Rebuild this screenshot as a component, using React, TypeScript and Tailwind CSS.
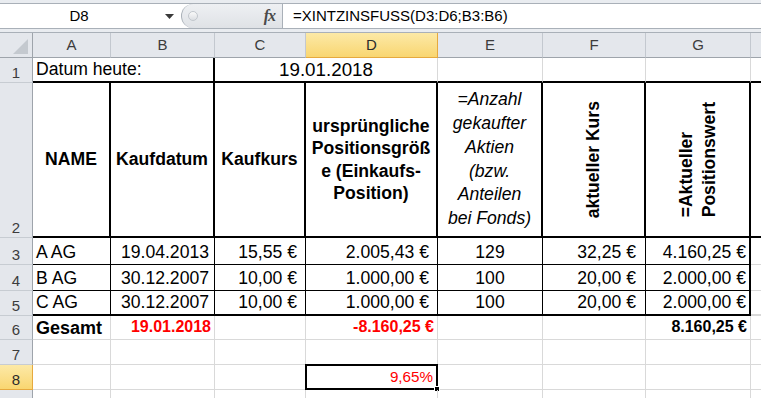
import React from 'react';

type CellProps = { w: string; className?: string; children?: React.ReactNode };

const Cell = ({ w, className = '', children }: CellProps) => (
  <div className={`${w} shrink-0 flex ${className}`}>{children}</div>
);

const RowHead = ({ n, active = false }: { n?: number; active?: boolean }) => (
  <div
    className={`w-[33px] shrink-0 flex items-end justify-center leading-[18px] font-normal not-italic text-[15px] border-r border-b ${
      active
        ? 'bg-linear-to-b from-[#fce9a6] to-[#f9d670] border-b-[#e6a93e] border-r-[#e6a93e] text-[#2b2b2b]'
        : 'bg-[#e4e7ec] border-b-[#c7ccd2] border-r-[#9ea4ab] text-[#3c3c3c]'
    }`}
  >
    {n}
  </div>
);

const ColHead = ({ w, label, active = false }: { w: string; label: string; active?: boolean }) => (
  <div
    className={`${w} shrink-0 flex items-center justify-center text-[15px] border-r border-b ${
      active
        ? 'bg-linear-to-b from-[#fce9a6] to-[#f9d670] border-r-[#e6a93e] border-b-[#e6a93e] text-[#2b2b2b]'
        : 'bg-[#e4e7ec] border-r-[#c3c8cf] border-b-[#9ea4ab] text-[#3c3c3c]'
    }`}
  >
    {label}
  </div>
);

const App: React.FC = () => {
  return (
    <div className="w-[761px] h-[398px] overflow-hidden bg-white [font-family:'Liberation_Sans',Arial,sans-serif] text-black">
      {/* formula bar */}
      <div className="h-[32px] bg-[#e9ecf0] pt-[3px]">
        <div className="h-[26px] flex bg-white border-y border-[#a9b0b8]">
          <div className="w-[158px] flex items-center justify-center text-[15px] pt-[1px]">D8</div>
          <div className="w-[23px] flex items-center justify-center">
            <svg width="9" height="5" viewBox="0 0 9 5">
              <polygon points="0,0 9,0 4.5,5" fill="#3a3a3a" />
            </svg>
          </div>
          <div className="w-[101px] flex items-center rounded-l-[13px] border-l border-[#a9b0b8] bg-linear-to-b from-[#eef0f3] to-[#dfe2e6]">
            <div className="ml-[6px] w-[10px] h-[10px] rounded-full border border-[#c2c7cd] bg-linear-to-b from-[#fafafa] to-[#dcdfe3]" />
            <span className="ml-auto mr-[7px] [font-family:'Liberation_Serif',serif] italic font-bold text-[16px] text-[#4a4a4a] tracking-[-1px]">
              fx
            </span>
          </div>
          <div className="flex-1 flex items-center pl-[10px] border-l border-[#a9b0b8] text-[15px] pt-[1px]">
            =XINTZINSFUSS(D3:D6;B3:B6)
          </div>
        </div>
      </div>

      {/* column headers */}
      <div className="flex h-[26px] border-t border-[#a9b0b8]">
        <div className="w-[33px] shrink-0 flex items-end justify-end pr-[4px] pb-[3px] bg-[#e4e7ec] border-r border-b border-[#9ea4ab]">
          <svg width="15" height="15" viewBox="0 0 15 15">
            <polygon points="15,0 15,15 0,15" fill="#c4c9cf" />
          </svg>
        </div>
        <ColHead w="w-[78px]" label="A" />
        <ColHead w="w-[104px]" label="B" />
        <ColHead w="w-[91px]" label="C" />
        <ColHead w="w-[132px]" label="D" active />
        <ColHead w="w-[105px]" label="E" />
        <ColHead w="w-[103px]" label="F" />
        <ColHead w="w-[105px]" label="G" />
        <div className="flex-1 bg-[#e4e7ec] border-b border-[#9ea4ab]" />
      </div>

      {/* row 1 */}
      <div className="flex h-[25px] text-[17.6px] leading-[20px]">
        <RowHead n={1} />
        <Cell w="w-[182px]" className="items-end pl-[3px] pb-[2px] border-r-2 border-b-2 border-black">
          Datum heute:
        </Cell>
        <Cell w="w-[223px]" className="items-end justify-center pb-[1px] text-[18.8px] border-r border-b-2 border-r-[#d9d9d9] border-b-black">
          19.01.2018
        </Cell>
        <Cell w="w-[105px]" className="border-r border-b-2 border-r-[#d9d9d9] border-b-black" />
        <Cell w="w-[103px]" className="border-r border-b-2 border-r-[#d9d9d9] border-b-black" />
        <Cell w="w-[105px]" className="border-r border-b-2 border-r-[#d9d9d9] border-b-black" />
        <div className="flex-1 border-b-2 border-black" />
      </div>

      {/* row 2 */}
      <div className="flex h-[155px] text-[17.6px] font-bold">
        <RowHead n={2} />
        <Cell w="w-[78px]" className="items-center justify-center border-r-2 border-b-2 border-black">
          NAME
        </Cell>
        <Cell w="w-[104px]" className="items-center justify-center border-r-2 border-b-2 border-black">
          Kaufdatum
        </Cell>
        <Cell w="w-[91px]" className="items-center justify-center border-r-2 border-b-2 border-black">
          Kaufkurs
        </Cell>
        <Cell w="w-[132px]" className="items-center justify-center text-center leading-[22.4px] border-r-2 border-b-2 border-black">
          <div>
            ursprüngliche
            <br />
            Positionsgröß
            <br />e (Einkaufs-
            <br />
            Position)
          </div>
        </Cell>
        <Cell w="w-[105px]" className="items-center justify-center text-center leading-[23.8px] font-normal italic border-r-2 border-b-2 border-black">
          <div>
            =Anzahl
            <br />
            gekaufter
            <br />
            Aktien
            <br />
            (bzw.
            <br />
            Anteilen
            <br />
            bei Fonds)
          </div>
        </Cell>
        <Cell w="w-[103px]" className="items-center justify-center border-r-2 border-b-2 border-black">
          <div className="[writing-mode:vertical-rl] rotate-180 leading-[23px]">aktueller Kurs</div>
        </Cell>
        <Cell w="w-[105px]" className="items-center justify-center border-r-2 border-b-2 border-black">
          <div className="[writing-mode:vertical-rl] rotate-180 leading-[23px] text-left">
            =Aktueller
            <br />
            Positionswert
          </div>
        </Cell>
        <div className="flex-1 border-b-2 border-black" />
      </div>

      {/* rows 3-5 */}
      {[
        ['A AG', '19.04.2013', '15,55 €', '2.005,43 €', '129', '32,25 €', '4.160,25 €', 'h-[27px]', 'border-b'],
        ['B AG', '30.12.2007', '10,00 €', '1.000,00 €', '100', '20,00 €', '2.000,00 €', 'h-[26px]', 'border-b'],
        ['C AG', '30.12.2007', '10,00 €', '1.000,00 €', '100', '20,00 €', '2.000,00 €', 'h-[25px]', 'border-b-2'],
      ].map((r, i) => (
        <div key={i} className={`flex ${r[7]} text-[17.6px] leading-[20px]`}>
          <RowHead n={i + 3} />
          <Cell w="w-[78px]" className={`items-end pl-[3px] pb-[2px] border-r ${r[8]} border-black`}>
            {r[0]}
          </Cell>
          <Cell w="w-[104px]" className={`items-end justify-end pr-[5px] pb-[2px] border-r ${r[8]} border-black`}>
            {r[1]}
          </Cell>
          <Cell w="w-[91px]" className={`items-end justify-end pr-[8px] pb-[2px] border-r ${r[8]} border-black`}>
            {r[2]}
          </Cell>
          <Cell w="w-[132px]" className={`items-end justify-end pr-[8px] pb-[2px] border-r ${r[8]} border-black`}>
            {r[3]}
          </Cell>
          <Cell w="w-[105px]" className={`items-end justify-center pb-[2px] border-r ${r[8]} border-black`}>
            {r[4]}
          </Cell>
          <Cell w="w-[103px]" className={`items-end justify-end pr-[9px] pb-[2px] border-r ${r[8]} border-black`}>
            {r[5]}
          </Cell>
          <Cell w="w-[105px]" className={`items-end justify-end pr-[3px] pb-[2px] border-r-2 ${r[8]} border-black`}>
            {r[6]}
          </Cell>
          <div className={`flex-1 ${r[8]} border-[#d9d9d9]`} />
        </div>
      ))}

      {/* row 6 */}
      <div className="flex h-[24px] leading-[20px] font-bold">
        <RowHead n={6} />
        <Cell w="w-[78px]" className="items-end pl-[3px] pb-[1px] text-[18px] border-r border-b border-[#d9d9d9]">
          Gesamt
        </Cell>
        <Cell w="w-[104px]" className="items-end justify-end pr-[3px] pb-[2px] text-[16px] text-[#ff0000] border-r border-b border-[#d9d9d9]">
          19.01.2018
        </Cell>
        <Cell w="w-[91px]" className="border-r border-b border-[#d9d9d9]" />
        <Cell w="w-[132px]" className="items-end justify-end pr-[3px] pb-[2px] text-[16px] text-[#ff0000] border-r border-b border-[#d9d9d9]">
          -8.160,25 €
        </Cell>
        <Cell w="w-[105px]" className="border-r border-b border-[#d9d9d9]" />
        <Cell w="w-[103px]" className="border-r border-b border-[#d9d9d9]" />
        <Cell w="w-[105px]" className="items-end justify-end pr-[3px] pb-[2px] text-[16px] border-r border-b border-[#d9d9d9]">
          8.160,25 €
        </Cell>
        <div className="flex-1 border-b border-[#d9d9d9]" />
      </div>

      {/* rows 7-9 */}
      {[7, 8, 9].map((n) => (
        <div key={n} className="flex h-[25px] leading-[20px]">
          <RowHead n={n < 9 ? n : undefined} active={n === 8} />
          <Cell w="w-[78px]" className="border-r border-b border-[#d9d9d9]" />
          <Cell w="w-[104px]" className="border-r border-b border-[#d9d9d9]" />
          <Cell w="w-[91px]" className="border-r border-b border-[#d9d9d9]" />
          <Cell w="w-[132px]" className="relative items-end justify-end pr-[4px] pb-[2px] text-[15.2px] text-[#ff0000] border-r border-b border-[#d9d9d9]">
            {n === 8 && (
              <>
                9,65%
                <div className="absolute -left-[1px] -top-[1px] right-[-1px] bottom-[-1px] border-2 border-black" />
                <div className="absolute right-[-3px] bottom-[-3px] w-[6px] h-[6px] bg-black border border-white" />
              </>
            )}
          </Cell>
          <Cell w="w-[105px]" className="border-r border-b border-[#d9d9d9]" />
          <Cell w="w-[103px]" className="border-r border-b border-[#d9d9d9]" />
          <Cell w="w-[105px]" className="border-r border-b border-[#d9d9d9]" />
          <div className="flex-1 border-b border-[#d9d9d9]" />
        </div>
      ))}
    </div>
  );
};

export default App;
